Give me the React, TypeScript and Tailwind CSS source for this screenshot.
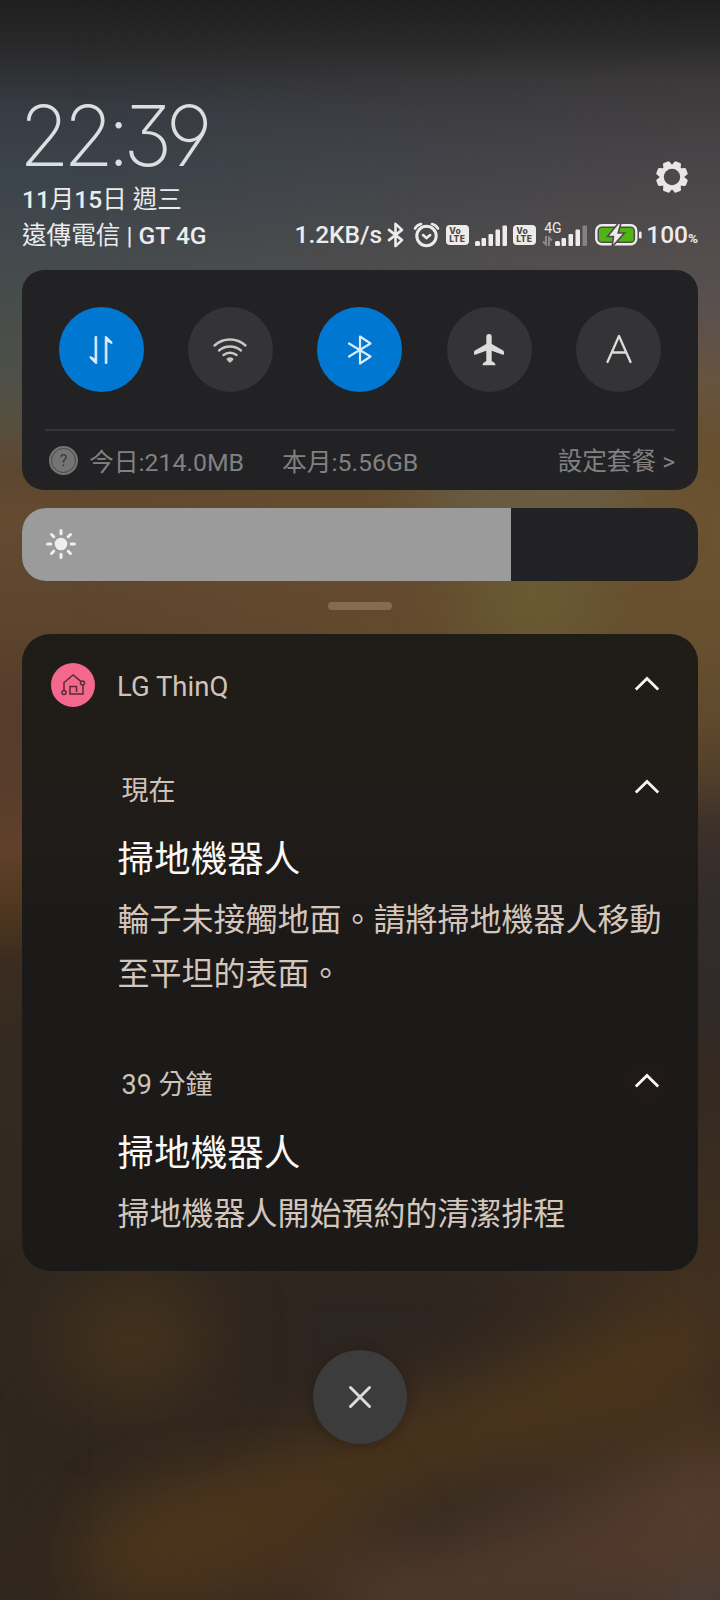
import type { ReactNode } from "react"
import clsx from "clsx"

function Wallpaper() {
  return (
    <div className="absolute inset-0 overflow-hidden">
      <div className="absolute inset-0 bg-[linear-gradient(180deg,#1f1f1f_0px,#2a2a2b_50px,#373c44_110px,#3b434b_170px,#454b4d_265px,#4c5048_370px,#564f40_420px,#5d4730_470px,#644a2f_520px,#60472f_570px,#5c442d_630px,#563c2c_700px,#583c2b_780px,#60402a_850px,#52391f_900px,#3c2c20_960px,#332a20_1060px,#30281f_1300px,#30271d_1500px,#32281e_1600px)]" />
      <div className="absolute inset-0 bg-[linear-gradient(180deg,#1f1f1f_0px,#2a2929_40px,#3c393a_80px,#474346_150px,#544e4e_260px,#5a504e_310px,#66543f_380px,#67502f_440px,#6b5230_520px,#68502f_630px,#5f4a2e_720px,#54402a_770px,#3c302a_830px,#332c2a_900px,#312a28_1000px,#362a20_1100px,#3f2f20_1280px,#38291f_1380px,#46321f_1440px,#503a2c_1500px,#4a3a30_1550px,#443c38_1600px)] [mask-image:linear-gradient(90deg,transparent_10%,#000_95%)]" />
      <div className="absolute -inset-x-10 top-[1250px] h-[400px] bg-[#2d2520] blur-[30px] [mask-image:linear-gradient(90deg,transparent,#000_45%,#000_60%,transparent_90%)]" />
      <div className="absolute top-[1280px] left-[60px] h-[120px] w-[150px] rounded-full bg-[#48341c]/80 blur-[35px]" />
      <div className="absolute top-[1410px] left-[60px] h-[90px] w-[680px] -rotate-[20deg] rounded-full bg-[#573b1a]/75 blur-[36px]" />
      <div className="absolute top-[1500px] left-[120px] h-[110px] w-[260px] rounded-full bg-[#50361c]/60 blur-[36px]" />
      <div className="absolute top-[1515px] left-[320px] h-[100px] w-[460px] -rotate-[12deg] rounded-full bg-[#543b2c]/90 blur-[35px]" />
      <div className="absolute top-[450px] left-[420px] h-[80px] w-[230px] rounded-full bg-[#6a7060]/50 blur-[32px]" />
      <div className="absolute top-[530px] left-[470px] h-[130px] w-[130px] rounded-full bg-[#6a6034]/80 blur-[36px]" />
    </div>
  )
}

function BluetoothIcon({ className, width }: { className?: string; width: number }) {
  return (
    <svg viewBox="0 0 18 28" fill="none" stroke="currentColor" strokeWidth={width} strokeLinejoin="round" strokeLinecap="round" className={className}>
      <path d="M2 8.500 16 19.500 9 26V2l7 6.500L2 19.500" />
    </svg>
  )
}

function VoLte() {
  return (
    <div className="flex h-[20px] w-[23px] flex-col justify-center rounded-[4px] bg-[#eeecea] pl-[3px] font-['Inter'] text-[8.5px] leading-[8px] font-extrabold text-[#4c4847]">
      <span className="tracking-[0.4px]">Vo</span>
      <span className="tracking-[0.3px]">LTE</span>
    </div>
  )
}

function Signal({ weak }: { weak?: boolean }) {
  return (
    <svg width="32" height="21" viewBox="0 0 32 21" fill="#eeecea">
      <rect x="0" y="16" width="5" height="5" rx="1.500" />
      <rect x="6.500" y="13" width="4.500" height="8" rx="1" />
      <rect x="13.500" y="9" width="4.500" height="12" rx="1" />
      <rect x="20.500" y="4.500" width="4.500" height="16.500" rx="1" />
      <rect x="27.500" y="0.500" width="4.500" height="20.500" rx="1" opacity={weak ? 0.35 : 1} />
    </svg>
  )
}

function Header() {
  return (
    <header className="flex h-[270px] flex-col pt-[92px]">
      <div className="flex h-[88px] justify-between pr-[10px]">
        <div className="-ml-[3px] origin-left scale-x-[0.98] font-['Inter'] text-[84px] leading-[88px] font-[250] tracking-[-6.8px] text-[#dcdee0] [font-feature-settings:'cv09','ss01']">
          22:39
        </div>
        <svg width="32" height="32" viewBox="-16 -16 32 32" className="mt-[69px]">
          <g fill="#e8e6e6">
            {[22.5, 67.5, 112.5, 157.5].map((deg) => (
              <path key={deg} d="M-2.200-16h4.400q1 0 1.300 1L5-10V10L3.500 15q-.3 1-1.300 1h-4.400q-1 0-1.300-1L-5 10V-10L-3.500-15q.3-1 1.300-1z" transform={`rotate(${deg})`} />
            ))}
            <circle r="12.300" />
          </g>
          <circle r="8.200" fill="#4d494b" />
        </svg>
      </div>
      <div className="mt-[3px] h-[34px] text-[24.5px] leading-[34px] text-[#ececec]">
        <span className="font-medium">11</span>月<span className="font-medium">15</span>日 週三
      </div>
      <div className="flex h-[36px] items-center justify-between whitespace-nowrap text-[#ececec]">
        <div className="mt-px text-[24.6px] leading-[36px]">
          遠傳電信 | <span className="font-medium">GT 4G</span>
        </div>
        <div className="flex items-center">
          <span className="text-[24.5px] font-medium">1.2KB/s</span>
          <BluetoothIcon width={2.8} className="ml-[5px] h-[26px] w-[17px]" />
          <svg width="27" height="26" viewBox="0 0 27 26" fill="none" stroke="currentColor" strokeWidth="3" strokeLinecap="round" className="ml-[9px]">
            <circle cx="13.500" cy="14" r="9.700" />
            <path d="m10 13 3.500 3 3.700-3" strokeWidth="2.500" />
            <path d="M2 6.500Q4 3 8 2M25 6.500Q23 3 19 2" strokeWidth="2.600" />
          </svg>
          <div className="ml-[6px]">
            <VoLte />
          </div>
          <div className="ml-[6px]">
            <Signal />
          </div>
          <div className="ml-[6px]">
            <VoLte />
          </div>
          <div className="relative ml-[19px]">
            <span className="absolute -top-[5px] -left-[11px] text-[14px] leading-[16px]">4G</span>
            <svg width="11" height="10" viewBox="0 0 11 10" fill="none" stroke="#8b8785" strokeWidth="2" className="absolute bottom-0 -left-[13px]">
              <path d="M1 5.500 4 8.500V0M10 4.500 7 1.500V10" />
            </svg>
            <Signal weak />
          </div>
          <svg width="47" height="22" viewBox="0 0 47 22" className="ml-[8px]">
            <rect x="1.300" y="1.300" width="40" height="19" rx="5.500" fill="none" stroke="#eeecea" strokeWidth="2.400" />
            <rect x="4" y="4" width="34.500" height="13.600" rx="2.500" fill="#50b514" />
            <path d="M23.500-1 12.500 12.500h6L17 23l12.500-14h-6.300L26-1z" fill="#eeecea" stroke="#4e4a49" strokeWidth="1.600" />
            <rect x="44" y="7.500" width="2.600" height="7" rx="1.300" fill="#eeecea" />
          </svg>
          <span className="ml-[4px] text-[24.5px] leading-none font-medium">100</span>
          <span className="mt-[7px] text-[13.5px] leading-none font-bold">%</span>
        </div>
      </div>
    </header>
  )
}

function Tile({ active, children }: { active?: boolean; children: ReactNode }) {
  return (
    <div className={clsx("flex size-[85px] items-center justify-center rounded-full", active ? "bg-[#0078d2] text-[#d8ecfc]" : "bg-[#343436] text-[#dcdcdc]")}>
      {children}
    </div>
  )
}

function QuickSettings() {
  return (
    <section className="h-[220px] rounded-[22px] bg-[#222224] px-[23px] pt-[37px]">
      <div className="flex justify-between pr-[14px] pl-[13.5px]">
        <Tile active>
          <svg width="24" height="30" viewBox="0 0 24 30" fill="currentColor" stroke="currentColor" strokeWidth="0.800" strokeLinejoin="round">
            <path d="M6 1.500h1.800v27H6.500L1 23v-1.700l5 2.500zM18 28.500h-1.800v-27h1.300L23 7v1.700l-5-2.500z" />
          </svg>
        </Tile>
        <Tile>
          <svg width="36" height="28" viewBox="0 0 36 28" fill="none" stroke="#c8c8c8" strokeWidth="2.400" strokeLinecap="round">
            <path d="M2.500 9.500a23 23 0 0 1 31 0M7 14.500a17 17 0 0 1 22 0M11.500 19a10.500 10.500 0 0 1 13 0" />
            <path d="M15.800 23.200q2.200-1.600 4.400 0L18 25.500z" fill="#c8c8c8" strokeLinejoin="round" />
          </svg>
        </Tile>
        <Tile active>
          <svg width="26" height="32" viewBox="0 0 26 32" fill="none" stroke="currentColor" strokeWidth="2.200" strokeLinejoin="round" strokeLinecap="round">
            <path d="M2 9.500 23.500 22.500 13 29.500v-27l10.500 7L2 22.500" />
          </svg>
        </Tile>
        <Tile>
          <svg width="30" height="32" viewBox="0 0 30 32" fill="currentColor">
            <path d="M15 0a2.700 2.700 0 0 1 2.700 2.700V10l11 6.300q1.500 1 1.300 2.500v1.500q-.3.700-1.200.4l-11.100-4V27l3 1.900q.8.700.6 2.300H8.700q-.2-1.600.6-2.300l3-1.900V16.700l-11.100 4q-.9.300-1.200-.4v-1.500q-.2-1.500 1.300-2.500l11-6.300V2.700A2.700 2.700 0 0 1 15 0z" />
          </svg>
        </Tile>
        <Tile>
          <svg width="26" height="30" viewBox="0 0 26 30" fill="none" stroke="currentColor" strokeWidth="2.300" strokeLinejoin="round" strokeLinecap="round" className="mb-[2px]">
            <path d="M1.500 28 13 2l11.500 26M5.800 18.500h14.400" />
          </svg>
        </Tile>
      </div>
      <div className="mt-[37px] h-[2px] bg-[#353537]" />
      <div className="flex h-[59px] items-center pl-[4px] text-[24.8px] text-[#818181]">
        <div className="flex size-[29px] items-center justify-center rounded-full bg-[#747474]">
          <div className="flex size-[25px] items-center justify-center rounded-full border border-[#4a4a4a] text-[16px] text-[#3a3a3a]">?</div>
        </div>
        <span className="mt-[4px] ml-[11px]">今日:214.0MB</span>
        <span className="mt-[4px] ml-[38px]">本月:5.56GB</span>
        <span className="mt-[4px] ml-auto text-[24.6px]">設定套餐 &gt;</span>
      </div>
    </section>
  )
}

function Brightness() {
  return (
    <div className="mt-[18px] h-[73px] overflow-hidden rounded-[24px] bg-[#222224]">
      <div className="flex h-full w-[489px] items-center bg-[#9b9b9b] pl-[24px]">
        <svg width="30" height="30" viewBox="-15 -15 30 30" className="mb-[2px]">
          <circle r="6.300" fill="#efefef" />
          {[0, 45, 90, 135, 180, 225, 270, 315].map((deg) => (
            <path key={deg} d="M0-13.400v3.200" transform={`rotate(${deg})`} stroke="#efefef" strokeWidth="3" strokeLinecap="round" />
          ))}
        </svg>
      </div>
    </div>
  )
}

function Collapse({ className }: { className?: string }) {
  return (
    <div className={clsx("flex size-[44px] items-center justify-center rounded-full", className)}>
      <svg width="26" height="16" viewBox="0 0 26 16" fill="none" stroke="#fbf6f2" strokeWidth="2.800" className="mb-[3px]">
        <path d="M1.800 13.500 13 2.500l11.200 11" />
      </svg>
    </div>
  )
}

type NoticeProps = { time: string; title: string; body: string; dim?: boolean }

function Notice({ time, title, body, dim }: NoticeProps) {
  return (
    <article className="pl-[95.5px]">
      <div className="flex h-[44px] items-center justify-between pr-[29px] pl-[4px]">
        <span className="mt-[5px] text-[27px] leading-[38px] text-[#cfc3b9]">{time}</span>
        <Collapse className={dim ? "bg-[#1f1a17]" : ""} />
      </div>
      <h3 className="mt-[23px] text-[36.600px] leading-[54px] text-[#fbf8f5]">{title}</h3>
      <p className="mt-[6px] w-[546px] text-[32px] leading-[54px] text-[#d4c6bc]">{body}</p>
    </article>
  )
}

function Notifications() {
  return (
    <section className="mt-[24px] h-[637px] rounded-[28px] bg-[linear-gradient(180deg,#1f1d18_0%,#201c19_25%,#1b1a18_50%,#1b1a18_100%)] pt-[29px]">
      <div className="mb-[59px] flex h-[44px] items-center pr-[29px] pl-[29px]">
        <svg width="44" height="44" viewBox="0 0 44 44">
          <circle cx="22" cy="22" r="22" fill="#f5688e" />
          <g fill="none" stroke="#5a2a35" strokeWidth="1.500">
            <path d="M13 27.500V19.500L22.200 12l7.600 6.300M32 22v9H19v-7.500h6.500V29" />
            <circle cx="13" cy="29.500" r="2" />
            <circle cx="31.500" cy="20" r="2" />
          </g>
        </svg>
        <span className="mt-[4px] ml-[22px] text-[27.5px] text-[#cfc3b9]">LG ThinQ</span>
        <Collapse className="ml-auto" />
      </div>
      <Notice time="現在" title="掃地機器人" body="輪子未接觸地面。請將掃地機器人移動至平坦的表面。" />
      <div className="h-[59px]" />
      <Notice time="39 分鐘" title="掃地機器人" body="掃地機器人開始預約的清潔排程" dim />
    </section>
  )
}

export default function App() {
  return (
    <div className="relative h-[1600px] w-[720px] overflow-hidden bg-[#30281f] font-['Roboto','Noto_Sans_CJK_TC',sans-serif]">
      <Wallpaper />
      <main className="relative flex flex-col px-[22px]">
        <Header />
        <QuickSettings />
        <Brightness />
        <div className="mx-auto mt-[21px] h-[8px] w-[64px] rounded-full bg-[#866b53]" />
        <Notifications />
        <button className="mx-auto mt-[79px] flex size-[94px] items-center justify-center rounded-full bg-[#3c3c3c] shadow-[0_2px_14px_rgba(0,0,0,0.25)]">
          <svg width="24" height="24" viewBox="0 0 24 24" stroke="#dadada" strokeWidth="3" strokeLinecap="round">
            <path d="m2.500 2.500 19 19M21.500 2.500l-19 19" />
          </svg>
        </button>
      </main>
    </div>
  )
}
